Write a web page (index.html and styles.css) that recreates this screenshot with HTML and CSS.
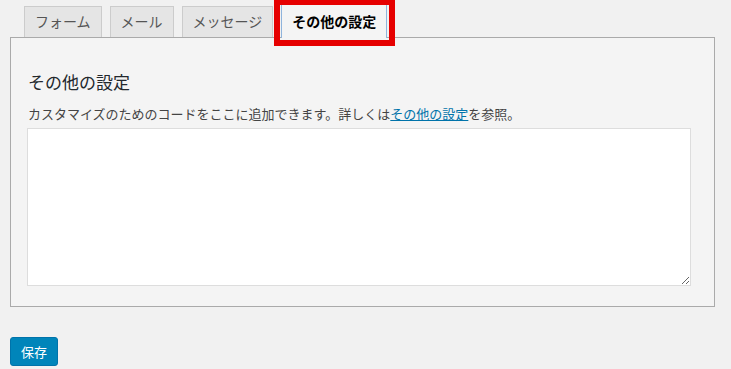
FILE: index.html
```html
<!DOCTYPE html>
<html lang="ja">
<head>
    <meta charset="UTF-8">
    <meta name="viewport" content="width=device-width, initial-scale=1.0">
    <title>その他の設定</title>
    <link rel="stylesheet" href="styles.css">
</head>
<body>
    <div class="wrap">
        <div class="tabs">
            <a class="tab" href="#">フォーム</a>
            <a class="tab" href="#">メール</a>
            <a class="tab" href="#">メッセージ</a>
            <a class="tab tab-active" href="#">その他の設定<span class="mark"></span></a>
        </div>

        <div class="panel">
            <h2 class="panel-title">その他の設定</h2>
            <p class="panel-desc">カスタマイズのためのコードをここに追加できます。詳しくは<a href="#">その他の設定</a>を参照。</p>
            <textarea class="code"></textarea>
        </div>

        <button class="save">保存</button>
    </div>
</body>
</html>
```

FILE: styles.css
```css
body {
    margin: 0;
    background: #f1f1f1;
    font-family: "Noto Sans CJK JP", "Noto Sans", sans-serif;
    color: #444;
}

.wrap {
    padding: 0 16px 0 10px;
}

.tabs {
    display: flex;
    align-items: flex-end;
    gap: 8px;
    height: 37px;
    padding-left: 14px;
}

.tab {
    display: block;
    height: 30px;
    line-height: 29px;
    padding: 0 10px;
    border: 1px solid #ccc;
    border-bottom: none;
    background: #e5e5e5;
    color: #555;
    font-size: 14px;
    text-decoration: none;
}

.tab-active {
    position: relative;
    height: 33px;
    line-height: 33px;
    margin-bottom: -1px;
    background: #f4f4f4;
    border-color: #8fb4dc;
    border-bottom: none;
    color: #000;
    font-weight: 700;
    z-index: 1;
}

.mark {
    position: absolute;
    left: -8px;
    right: -9px;
    top: -6px;
    bottom: -8px;
    border: 6px solid #e60000;
}

.panel {
    border: 1px solid #aaa;
    background: #f4f4f4;
    padding: 32px 23px 20px 16px;
}

.panel-title {
    margin: 0 0 11px 1px;
    font-size: 17px;
    font-weight: 400;
    line-height: 24px;
    color: #23282d;
}

.panel-desc {
    margin: 0 0 5px 1px;
    font-size: 13px;
    line-height: 18px;
}

.panel-desc a {
    color: #0073aa;
}

.code {
    display: block;
    box-sizing: border-box;
    width: 100%;
    height: 158px;
    border: 1px solid #ddd;
    background: #fff;
    margin: 0;
}

.save {
    display: block;
    margin-top: 30px;
    height: 29px;
    padding: 0 10px;
    border: 1px solid #0073aa;
    border-radius: 3px;
    background: #0085ba;
    color: #fff;
    font-family: "Noto Sans CJK JP", sans-serif;
    font-size: 13px;
}
```
